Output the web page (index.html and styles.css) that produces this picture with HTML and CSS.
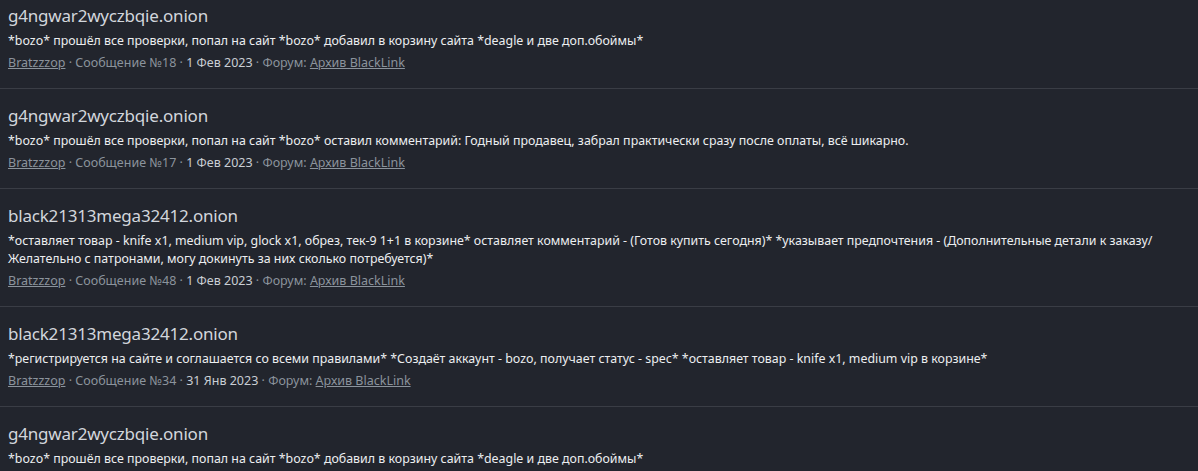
FILE: index.html
```html
<!DOCTYPE html>
<html lang="ru">
<head>
<meta charset="utf-8">
<link rel="stylesheet" href="styles.css">
</head>
<body>
<div class="list">
  <div class="item">
    <div class="title">g4ngwar2wyczbqie.onion</div>
    <div class="text">*bozo* прошёл все проверки, попал на сайт *bozo* добавил в корзину сайта *deagle и две доп.обоймы*</div>
    <div class="meta"><a href="#">Bratzzzop</a> · Сообщение №18 · <span class="date">1 Фев 2023</span> · Форум: <a href="#">Архив BlackLink</a></div>
  </div>
  <div class="item">
    <div class="title">g4ngwar2wyczbqie.onion</div>
    <div class="text">*bozo* прошёл все проверки, попал на сайт *bozo* оставил комментарий: Годный продавец, забрал практически сразу после оплаты, всё шикарно.</div>
    <div class="meta"><a href="#">Bratzzzop</a> · Сообщение №17 · <span class="date">1 Фев 2023</span> · Форум: <a href="#">Архив BlackLink</a></div>
  </div>
  <div class="item">
    <div class="title">black21313mega32412.onion</div>
    <div class="text">*оставляет товар - knife x1, medium vip, glock x1, обрез, тек-9 1+1 в корзине* оставляет комментарий - (Готов купить сегодня)* *указывает предпочтения - (Дополнительные детали к заказу/ Желательно с патронами, могу докинуть за них сколько потребуется)*</div>
    <div class="meta"><a href="#">Bratzzzop</a> · Сообщение №48 · <span class="date">1 Фев 2023</span> · Форум: <a href="#">Архив BlackLink</a></div>
  </div>
  <div class="item">
    <div class="title">black21313mega32412.onion</div>
    <div class="text">*регистрируется на сайте и соглашается со всеми правилами* *Создаёт аккаунт - bozo, получает статус - spec* *оставляет товар - knife x1, medium vip в корзине*</div>
    <div class="meta"><a href="#">Bratzzzop</a> · Сообщение №34 · <span class="date">31 Янв 2023</span> · Форум: <a href="#">Архив BlackLink</a></div>
  </div>
  <div class="item">
    <div class="title">g4ngwar2wyczbqie.onion</div>
    <div class="text">*bozo* прошёл все проверки, попал на сайт *bozo* добавил в корзину сайта *deagle и две доп.обоймы*</div>
    <div class="meta"><a href="#">Bratzzzop</a> · Сообщение №18 · <span class="date">1 Фев 2023</span> · Форум: <a href="#">Архив BlackLink</a></div>
  </div>
</div>
</body>
</html>
```

FILE: styles.css
```css
html, body {
  margin: 0;
  padding: 0;
  background: #22252d;
  height: 100%;
  overflow: hidden;
}
body {
  font-family: "Noto Sans", "Open Sans", sans-serif;
  color: #e6e8eb;
}
.list {
  margin-top: -12px;
}
.item {
  padding: 16px 8px 16px 8px;
  border-top: 1px solid #3a3d45;
}
.title {
  font-size: 17px;
  line-height: 22px;
  letter-spacing: -0.2px;
  color: #d2d6dc;
}
.text {
  margin-top: 5px;
  font-size: 12.4px;
  line-height: 18px;
  color: #eceef0;
  max-width: 1185px;
}
.meta {
  margin-top: 4px;
  font-size: 12.5px;
  line-height: 18px;
  color: #8b939c;
}
.meta a {
  color: #8b939c;
  text-decoration: underline;
}
.meta .date {
  color: #c9ced4;
}
```
